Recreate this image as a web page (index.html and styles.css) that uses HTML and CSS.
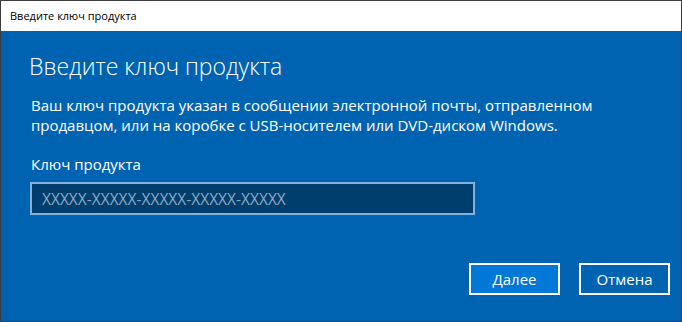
FILE: index.html
```html
<!DOCTYPE html>
<html lang="ru">
<head>
<meta charset="utf-8">
<title>Введите ключ продукта</title>
<link rel="stylesheet" href="styles.css">
</head>
<body>
<div class="window">
  <div class="titlebar">Введите ключ продукта</div>
  <div class="content">
    <h1 class="heading">Введите ключ продукта</h1>
    <p class="desc">Ваш ключ продукта указан в сообщении электронной почты, отправленном<br>продавцом, или на коробке с USB-носителем или DVD-диском Windows.</p>
    <label class="label" for="key">Ключ продукта</label>
    <input class="key-input" id="key" type="text" placeholder="XXXXX-XXXXX-XXXXX-XXXXX-XXXXX">
    <div class="footer">
      <button class="btn btn-primary">Далее</button>
      <button class="btn">Отмена</button>
    </div>
  </div>
</div>
</body>
</html>
```

FILE: styles.css
```css
* { box-sizing: border-box; }
html, body { margin: 0; padding: 0; }
body {
  width: 682px;
  height: 322px;
  font-family: "Open Sans", "Noto Sans", "Liberation Sans", sans-serif;
  background: #ffffff;
}
.window {
  width: 682px;
  height: 322px;
  border: 1px solid #3c3c3c;
  display: flex;
  flex-direction: column;
}
.titlebar {
  height: 30px;
  background: #ffffff;
  color: #000000;
  font-size: 11px;
  line-height: 30px;
  padding-left: 9px;
}
.content {
  flex: 1;
  background: #0063b1;
  color: #ffffff;
  padding: 19px 11px 0 29px;
  display: flex;
  flex-direction: column;
}
.heading {
  margin: 0 0 0 -1px;
  font-size: 23px;
  font-weight: 300;
  line-height: 32px;
}
.desc {
  margin: 13px 0 0 1px;
  font-size: 15px;
  line-height: 20px;
}
.label {
  margin: 19px 0 0 1px;
  font-size: 15px;
  line-height: 20px;
}
.key-input {
  margin-top: 8px;
  width: 445px;
  height: 33px;
  background: #003e6e;
  border: 2px solid #7fb2dc;
  outline: none;
  color: #ffffff;
  font-family: inherit;
  font-size: 15.5px;
  padding: 0 10px;
}
.key-input::placeholder { color: #8ca7c2; }
.footer {
  margin-top: 48px;
  display: flex;
  justify-content: flex-end;
  gap: 19px;
}
.btn {
  width: 91px;
  height: 32px;
  border: 2px solid #ffffff;
  background: #0063b1;
  color: #ffffff;
  font-family: inherit;
  font-size: 15px;
  padding: 0;
}
.btn-primary { background: #0078d7; }
```
